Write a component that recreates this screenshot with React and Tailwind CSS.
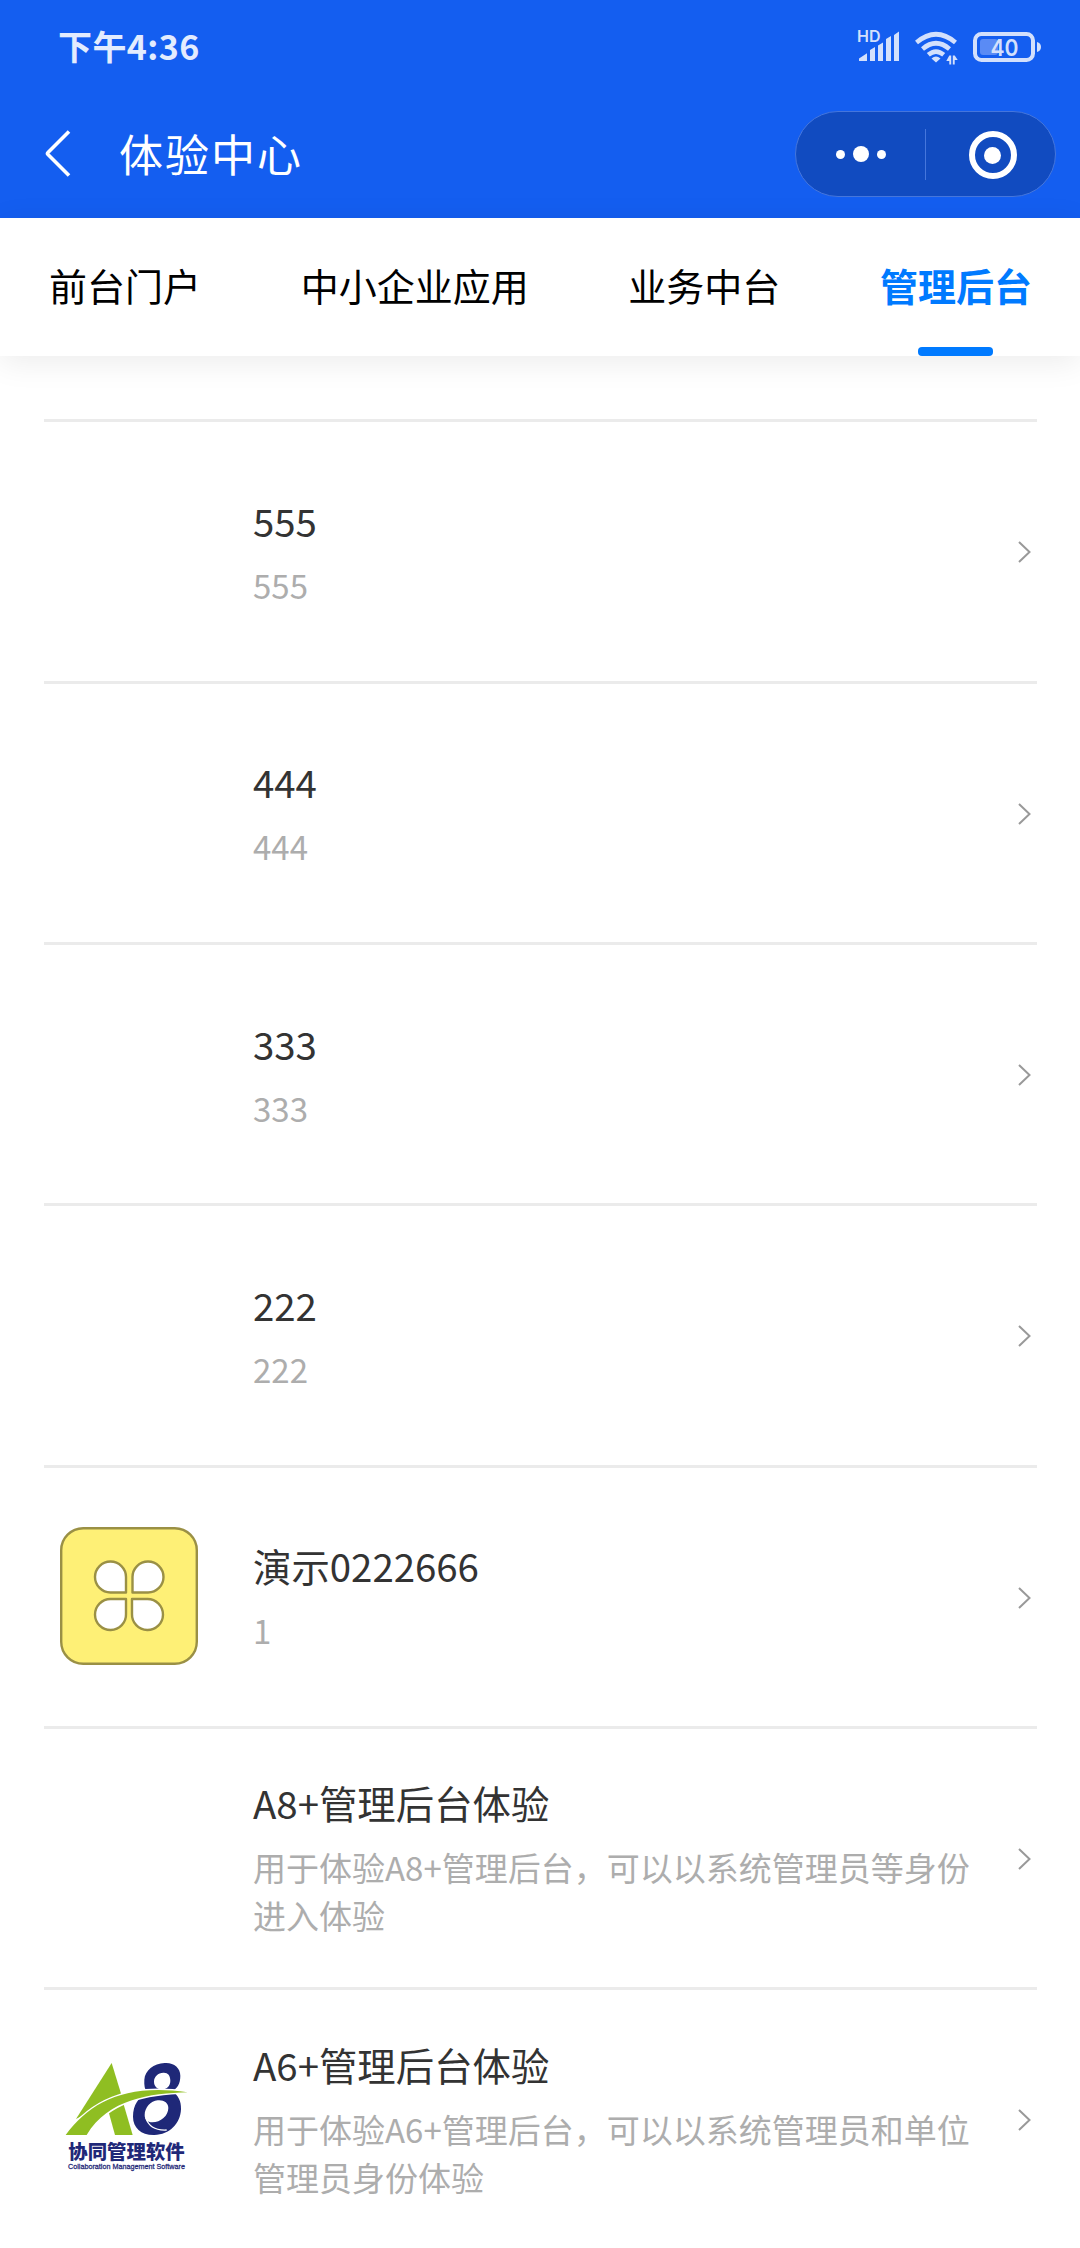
import React, { useState } from "react"

const TABS = ["前台门户", "中小企业应用", "业务中台", "管理后台"]

const APPS = [
  { id: 1, title: "555", desc: "555" },
  { id: 2, title: "444", desc: "444" },
  { id: 3, title: "333", desc: "333" },
  { id: 4, title: "222", desc: "222" },
  { id: 5, title: "演示0222666", desc: "1", icon: "clover" },
  { id: 6, title: "A8+管理后台体验", desc: "用于体验A8+管理后台，可以以系统管理员等身份进入体验" },
  { id: 7, title: "A6+管理后台体验", desc: "用于体验A6+管理后台，可以以系统管理员和单位管理员身份体验", icon: "a8" }
]

const StatusIcons = () => (
  <svg width="192" height="40" viewBox="850 26 192 40" fill="#d3e0fc">
    {/* HD + signal */}
    <text x="857" y="42" fontSize="15.5" fontWeight="600" fontFamily="Inter, sans-serif" textLength="23.5" lengthAdjust="spacingAndGlyphs">HD</text>
    <path d="M859 61v-2.6l8-5.200V61zM870 61V50l5-3V61zM878 61V45.500l5-3V61zM886 61V39l5-3V61zM894 61V35l5-3.500V61z" />
    {/* Wifi */}
    <g fill="none" stroke="#d3e0fc" strokeWidth="4.600">
      <path d="M916.500 42.500Q936 26 955.500 42.500" />
      <path d="M922.500 49Q936 37.500 949.500 49" />
      <path d="M928.300 54.800Q936 48.300 943.700 54.800" />
    </g>
    <path d="M931.500 58.500Q936 54.500 940.500 58.500L936 62.500z" />
    <path d="M949.300 55.500h1.900v9h-1.900v-3.500h-3zM952.800 64.500h1.900V60h3l-3-4.500h-1.900z" />
    {/* Battery */}
    <rect x="975" y="34" width="58" height="26" rx="6.500" fill="none" stroke="#d3e0fc" strokeWidth="4" />
    <rect x="980" y="39" width="18" height="16" rx="3" fill="#5a8bf5" />
    <path d="M1037 42q4 1 4 5t-4 5z" />
    <text x="990.500" y="55.700" fontSize="23" fontWeight="600" fontFamily="Inter, sans-serif" textLength="28" lengthAdjust="spacingAndGlyphs">40</text>
  </svg>
)

const CloverIcon = () => (
  <svg width="138" height="138" viewBox="0 0 138 138" fill="none" stroke="#9a9045" strokeWidth="2.400">
    <rect x="1.200" y="1.200" width="135.600" height="135.600" rx="22" fill="#fef076" />
    <g fill="#fff" strokeLinejoin="round">
      <path d="M66 65.500V50A15.500 15.500 0 1 0 50.500 65.500H66Z" />
      <path d="M72.500 65.500V50A15.500 15.500 0 1 1 88 65.500H72.500Z" />
      <path d="M66 72V87A15.500 15.500 0 1 1 50.500 72H66Z" />
      <path d="M72 72V87A15.500 15.500 0 1 0 87.500 72H72Z" />
    </g>
  </svg>
)

const A8Logo = () => (
  <svg width="138" height="138" viewBox="60 30 414 414">
    <path fill="#1f2878" fillRule="evenodd" d="M374 72C401 70 421 86 421 110C421 134 412 148 396 157C415 168 424 187 423 211C421 254 389 287 343 288C304 289 279 266 279 233C279 197 296 174 322 161C314 151 312 139 313 122C315 94 341 74 374 72ZM370 101C354 102 342 112 342 128C342 143 353 151 366 151C381 151 391 140 391 125C391 109 383 100 370 101ZM353 184C332 186 314 206 314 228C314 242 322 250 337 250C362 250 385 230 385 207C385 191 371 182 353 184Z" />
    <path d="M317 236Q330 276 380 273" fill="none" stroke="#fff" strokeWidth="4" />
    <path d="M202 205L249 190L278 288H225Z" fill="#8fbe22" />
    <path d="M215 72L245 170L108 240Z" fill="#8fbe22" />
    {/* Swoosh with its white gap */}
    <path d="M77 288C150 190 255 133 443 160C330 163 205 180 140 288Z" fill="#8fbe22" stroke="#fff" strokeWidth="9" paintOrder="stroke" />
    <path d="M60 290H300V300H60Z" fill="#fff" />
    <text x="85" y="359" fontSize="58" fontWeight="900" fill="#1f2878" fontFamily="'Noto Sans CJK SC', sans-serif" textLength="349" lengthAdjust="spacingAndGlyphs">协同管理软件</text>
    <text x="84" y="389" fontSize="22" fill="#1f2878" stroke="#1f2878" strokeWidth="0.800" fontFamily="'Liberation Sans Narrow', 'Liberation Sans', sans-serif" textLength="351" lengthAdjust="spacingAndGlyphs">Collaboration Management Software</text>
  </svg>
)

const AppRow = ({ app }) => (
  <div className="flex h-[261.33px] shrink-0 items-center border-b-3 border-[#ebebeb]">
    <div className="-mt-0.5 ml-4 h-[138px] w-[138px] shrink-0">
      {app.icon === "clover" && <CloverIcon />}
      {app.icon === "a8" && <A8Logo />}
    </div>
    <div className="ml-[55px] w-[732px] shrink-0 pb-0.5">
      <div className="text-[38.4px] leading-[57px] text-[#333]">{app.title}</div>
      <div className="mt-3 text-[33px] leading-[48px] text-[#adadad]">{app.desc}</div>
    </div>
    <svg className="mt-0.5 ml-[31px] shrink-0" width="16" height="24" viewBox="0 0 16 24" fill="none" stroke="#999" strokeWidth="2">
      <path d="M3 2L13.500 12L3 22" />
    </svg>
  </div>
)

const App = () => {
  const [active, setActive] = useState(3)

  return (
    <div className="flex h-[2248px] w-[1080px] flex-col overflow-hidden bg-white font-['Noto_Sans_CJK_SC',sans-serif]">
      {/* Status bar + navigation */}
      <header className="h-[218px] shrink-0 bg-[#145ef0] text-white">
        <div className="flex h-[92px] items-center justify-between pr-[38px] pl-[58px]">
          <span className="text-[34px] leading-[48px] font-bold tracking-[0.4px] text-[#e3ecfe]">下午4:36</span>
          <StatusIcons />
        </div>
        <div className="flex h-[124px] items-center pr-6 pl-[42px]">
          <svg width="30" height="50" viewBox="0 0 30 50" fill="none" stroke="#fff" strokeWidth="3.600">
            <path d="M27 2.500L6 23.500Q5 24.500 6 25.500L27 46.500" />
          </svg>
          <h1 className="-mt-[3px] ml-[47px] text-[44px] leading-[60px] font-normal tracking-[2px]">体验中心</h1>
          <div className="ml-auto flex h-[86px] w-[261px] items-center rounded-full border border-[#4576dc] bg-[#114bc0]">
            <div className="flex w-[129px] items-center justify-center gap-2">
              <span className="size-[9px] rounded-full bg-white" />
              <span className="size-4 rounded-full bg-white" />
              <span className="size-[9px] rounded-full bg-white" />
            </div>
            <div className="h-[51px] w-px bg-[#4576dc]" />
            <div className="flex flex-1 justify-center pt-0.5 pl-1">
              <div className="flex size-12 items-center justify-center rounded-full border-6 border-white">
                <span className="size-[17px] rounded-full bg-white" />
              </div>
            </div>
          </div>
        </div>
      </header>

      {/* Tabs */}
      <nav className="relative flex h-[138px] shrink-0 justify-between bg-white pr-12 pl-[49px] shadow-[0_6px_30px_rgba(0,0,0,0.08)]">
        {TABS.map((tab, i) => (
          <button
            key={tab}
            onClick={() => setActive(i)}
            className={`flex flex-col items-center justify-between pt-[39px] text-[38px] leading-[56px] ${i === active ? "font-bold text-[#007aff]" : "text-black"}`}
          >
            {tab}
            {i === active && <span className="h-[9px] w-[75px] rounded-[4px] bg-[#007aff]" />}
          </button>
        ))}
      </nav>

      {/* List */}
      <main className="mr-[43px] ml-11 flex flex-col">
        <div className="h-[66.2px] shrink-0 border-b-3 border-[#ebebeb]" />
        {APPS.map((app) => <AppRow key={app.id} app={app} />)}
      </main>
    </div>
  )
}

export default App
